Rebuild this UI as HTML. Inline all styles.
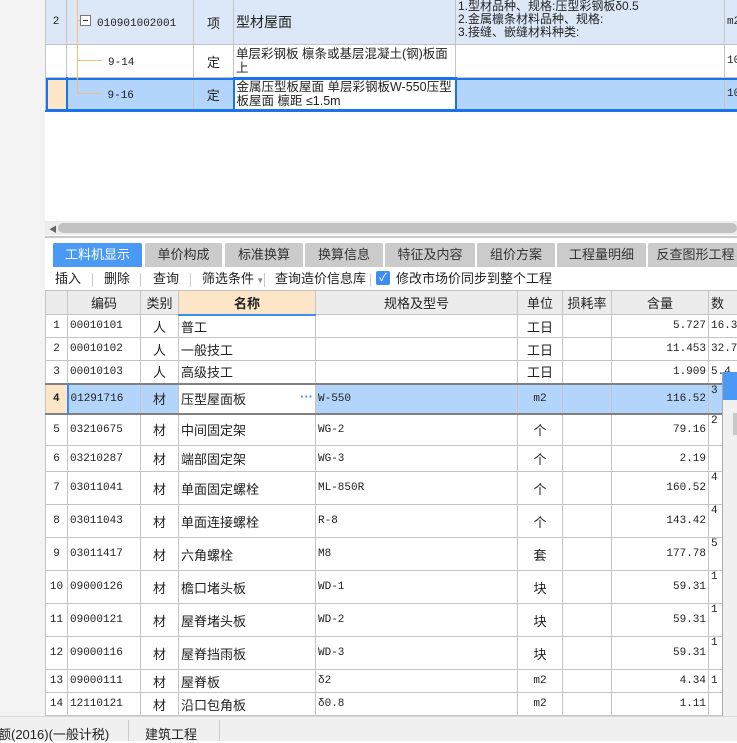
<!DOCTYPE html>
<html><head><meta charset="utf-8"><style>
*{box-sizing:border-box;margin:0;padding:0}
body{width:737px;height:741px;overflow:hidden;background:#fff;position:relative;font-family:"Liberation Sans","Noto Sans CJK SC",sans-serif;font-size:13px;color:#222}
.abs{position:absolute}
table{border-collapse:collapse;table-layout:fixed;position:absolute}
td{border:1px solid #c4c4c4;overflow:hidden;white-space:nowrap;vertical-align:middle;padding:0 2px}
.m{font-family:"Liberation Mono","Noto Sans CJK SC",monospace;font-size:11px}
.c{text-align:center}.r{text-align:right}
.tab{position:absolute;top:243px;height:24px;background:#cbcbcb;color:#333;font-size:13px;text-align:center;line-height:24px;border-radius:2px 2px 0 0}
.tb{position:absolute;top:270px;font-size:13px;line-height:18px}
.sep{position:absolute;top:273px;width:1px;height:14px;background:#ccc}
.ln{position:absolute;background:#f5c07a;z-index:5}
</style></head><body>
<div class="abs" style="left:0;top:0;width:45px;height:717px;background:#f3f3f3"></div>
<!-- upper grid -->
<table style="left:45px;top:-1px;width:720px">
<colgroup><col style="width:21px"><col style="width:127px"><col style="width:40px"><col style="width:222px"><col style="width:269px"><col style="width:41px"></colgroup>
<tr style="height:45px;background:#dce8f8"><td class="c m">2</td><td><span class="m" style="margin-left:28px">010901002001</span></td><td class="c">项</td><td style="font-size:14px">型材屋面</td><td style="font-size:12px;line-height:13px;vertical-align:top;padding-top:0">1.型材品种、规格:压型彩钢板δ0.5<br>2.金属檩条材料品种、规格:<br>3.接缝、嵌缝材料种类:</td><td class="m">m2</td></tr>
<tr style="height:33px"><td></td><td><span class="m" style="margin-left:39px">9-14</span></td><td class="c">定</td><td style="white-space:normal;line-height:14px;font-size:12.5px">单层彩钢板 檩条或基层混凝土(钢)板面上</td><td></td><td class="m">10</td></tr>
<tr style="height:33px;background:#b3d4fb;outline:2px solid #1a73e8;outline-offset:-2px"><td style="background:#fde6c8"></td><td style="border-left:2px solid #1a73e8"><span class="m" style="margin-left:38px">9-16</span></td><td class="c">定</td><td style="white-space:normal;line-height:14px;font-size:12.5px;background:#fff;border:2px solid #1a73e8">金属压型板屋面 单层彩钢板W-550压型板屋面 檩距 ≤1.5m</td><td></td><td class="m">10</td></tr>
</table>
<!-- tree lines -->
<div class="ln" style="left:77px;top:0;width:1px;height:93px"></div>
<div class="ln" style="left:77px;top:20px;width:4px;height:1px"></div>
<div class="abs" style="left:80px;top:15px;width:11px;height:11px;border:1px solid #777;background:#fff;z-index:6"><div class="abs" style="left:2px;top:4px;width:5px;height:1px;background:#333"></div></div>
<div class="ln" style="left:77px;top:60px;width:25px;height:1px"></div>
<div class="ln" style="left:77px;top:93px;width:25px;height:1px"></div>
<div class="abs" style="left:45px;top:110px;width:692px;height:2px;background:#1a73e8"></div>
<!-- scrollbar -->
<div class="abs" style="left:45px;top:221px;width:692px;height:14px;background:#ededed"></div>
<div class="abs" style="left:58px;top:223px;width:679px;height:10px;background:#c2c2c2;border-radius:5px"></div>
<div class="abs" style="left:49px;top:224px;font-size:8px;color:#666">◀</div>
<div class="abs" style="left:45px;top:236px;width:692px;height:2px;background:#c8c8c8"></div>
<!-- tabs -->
<div class="tab" style="left:53px;width:89px;background:#4a9af5;color:#fff">工料机显示</div>
<div class="tab" style="left:145px;width:77px">单价构成</div>
<div class="tab" style="left:225px;width:78px">标准换算</div>
<div class="tab" style="left:305px;width:78px">换算信息</div>
<div class="tab" style="left:385px;width:90px">特征及内容</div>
<div class="tab" style="left:477px;width:78px">组价方案</div>
<div class="tab" style="left:557px;width:89px">工程量明细</div>
<div class="tab" style="left:648px;width:95px">反查图形工程</div>
<!-- toolbar -->
<div class="tb" style="left:55px">插入</div><div class="sep" style="left:92px"></div>
<div class="tb" style="left:104px">删除</div><div class="sep" style="left:140px"></div>
<div class="tb" style="left:153px">查询</div><div class="sep" style="left:190px"></div>
<div class="tb" style="left:202px">筛选条件<span style="font-size:8px;color:#888"> ▼</span></div><div class="sep" style="left:264px"></div>
<div class="tb" style="left:275px">查询造价信息库</div><div class="sep" style="left:370px"></div>
<div class="abs" style="left:376px;top:271px;width:14px;height:14px;background:#3b8ef0;border-radius:2px;color:#fff;font-size:11px;line-height:14px;text-align:center">✓</div>
<div class="tb" style="left:396px">修改市场价同步到整个工程</div>
<!-- lower grid -->
<table style="left:45px;top:290px;width:703px">
<colgroup><col style="width:22px"><col style="width:73px"><col style="width:38px"><col style="width:137px"><col style="width:202px"><col style="width:45px"><col style="width:49px"><col style="width:97px"><col style="width:40px"></colgroup>
<tr style="height:24px;background:#ececec"><td></td><td class="c">编码</td><td class="c">类别</td><td class="c" style="background:#fde6c8;border-bottom:2px solid #3b8ef0;font-weight:bold">名称</td><td class="c">规格及型号</td><td class="c">单位</td><td class="c">损耗率</td><td class="c">含量</td><td>数</td></tr>
<tr style="height:23px"><td class="c m">1</td><td class="m">00010101</td><td class="c">人</td><td>普工</td><td></td><td class="c">工日</td><td></td><td class="r m">5.727</td><td class="m">16.3</td></tr>
<tr style="height:23px"><td class="c m">2</td><td class="m">00010102</td><td class="c">人</td><td>一般技工</td><td></td><td class="c">工日</td><td></td><td class="r m">11.453</td><td class="m">32.7</td></tr>
<tr style="height:23px"><td class="c m">3</td><td class="m">00010103</td><td class="c">人</td><td>高级技工</td><td></td><td class="c">工日</td><td></td><td class="r m">1.909</td><td class="m">5.4</td></tr>
<tr style="height:30px;background:#b3d4fb;border-top:2px solid #808080;border-bottom:2px solid #808080"><td class="c m" style="background:#fde6c8;font-weight:bold">4</td><td class="m" style="border-left:2px solid #3b8ef0">01291716</td><td class="c">材</td><td style="background:#fff">压型屋面板<span style="float:right;color:#3b8ef0;font-weight:bold">···</span></td><td class="m">W-550</td><td class="c m">m2</td><td></td><td class="r m">116.52</td><td class="m" style="vertical-align:top">3</td></tr>
<tr style="height:32px"><td class="c m">5</td><td class="m">03210675</td><td class="c">材</td><td>中间固定架</td><td class="m">WG-2</td><td class="c">个</td><td></td><td class="r m">79.16</td><td class="m" style="vertical-align:top">2</td></tr>
<tr style="height:26px"><td class="c m">6</td><td class="m">03210287</td><td class="c">材</td><td>端部固定架</td><td class="m">WG-3</td><td class="c">个</td><td></td><td class="r m">2.19</td><td></td></tr>
<tr style="height:33px"><td class="c m">7</td><td class="m">03011041</td><td class="c">材</td><td>单面固定螺栓</td><td class="m">ML-850R</td><td class="c">个</td><td></td><td class="r m">160.52</td><td class="m" style="vertical-align:top">4</td></tr>
<tr style="height:33px"><td class="c m">8</td><td class="m">03011043</td><td class="c">材</td><td>单面连接螺栓</td><td class="m">R-8</td><td class="c">个</td><td></td><td class="r m">143.42</td><td class="m" style="vertical-align:top">4</td></tr>
<tr style="height:33px"><td class="c m">9</td><td class="m">03011417</td><td class="c">材</td><td>六角螺栓</td><td class="m">M8</td><td class="c">套</td><td></td><td class="r m">177.78</td><td class="m" style="vertical-align:top">5</td></tr>
<tr style="height:33px"><td class="c m">10</td><td class="m">09000126</td><td class="c">材</td><td>檐口堵头板</td><td class="m">WD-1</td><td class="c">块</td><td></td><td class="r m">59.31</td><td class="m" style="vertical-align:top">1</td></tr>
<tr style="height:33px"><td class="c m">11</td><td class="m">09000121</td><td class="c">材</td><td>屋脊堵头板</td><td class="m">WD-2</td><td class="c">块</td><td></td><td class="r m">59.31</td><td class="m" style="vertical-align:top">1</td></tr>
<tr style="height:33px"><td class="c m">12</td><td class="m">09000116</td><td class="c">材</td><td>屋脊挡雨板</td><td class="m">WD-3</td><td class="c">块</td><td></td><td class="r m">59.31</td><td class="m" style="vertical-align:top">1</td></tr>
<tr style="height:23px"><td class="c m">13</td><td class="m">09000111</td><td class="c">材</td><td>屋脊板</td><td class="m">δ2</td><td class="c m">m2</td><td></td><td class="r m">4.34</td><td class="m">1</td></tr>
<tr style="height:23px"><td class="c m">14</td><td class="m">12110121</td><td class="c">材</td><td>沿口包角板</td><td class="m">δ0.8</td><td class="c m">m2</td><td></td><td class="r m">1.11</td><td></td></tr>
</table>
<!-- right panel -->
<div class="abs" style="left:722px;top:372px;width:15px;height:345px;background:#f0f0f0;border-left:1px solid #aaa"></div>
<div class="abs" style="left:723px;top:372px;width:14px;height:28px;background:#4a9af5"></div>
<div class="abs" style="left:733px;top:413px;width:4px;height:22px;background:#c8c8c8"></div>
<!-- status bar -->
<div class="abs" style="left:0;top:716px;width:737px;height:25px;background:#f0f0f0;border-top:1px solid #d8d8d8"></div>
<div class="abs" style="left:-2px;top:724px;font-size:13px">额(2016)(一般计税)</div>
<div class="abs" style="left:128px;top:720px;width:1px;height:21px;background:#ccc"></div>
<div class="abs" style="left:145px;top:724px;font-size:13px">建筑工程</div>
<div class="abs" style="left:219px;top:720px;width:1px;height:21px;background:#ccc"></div>
</body></html>
